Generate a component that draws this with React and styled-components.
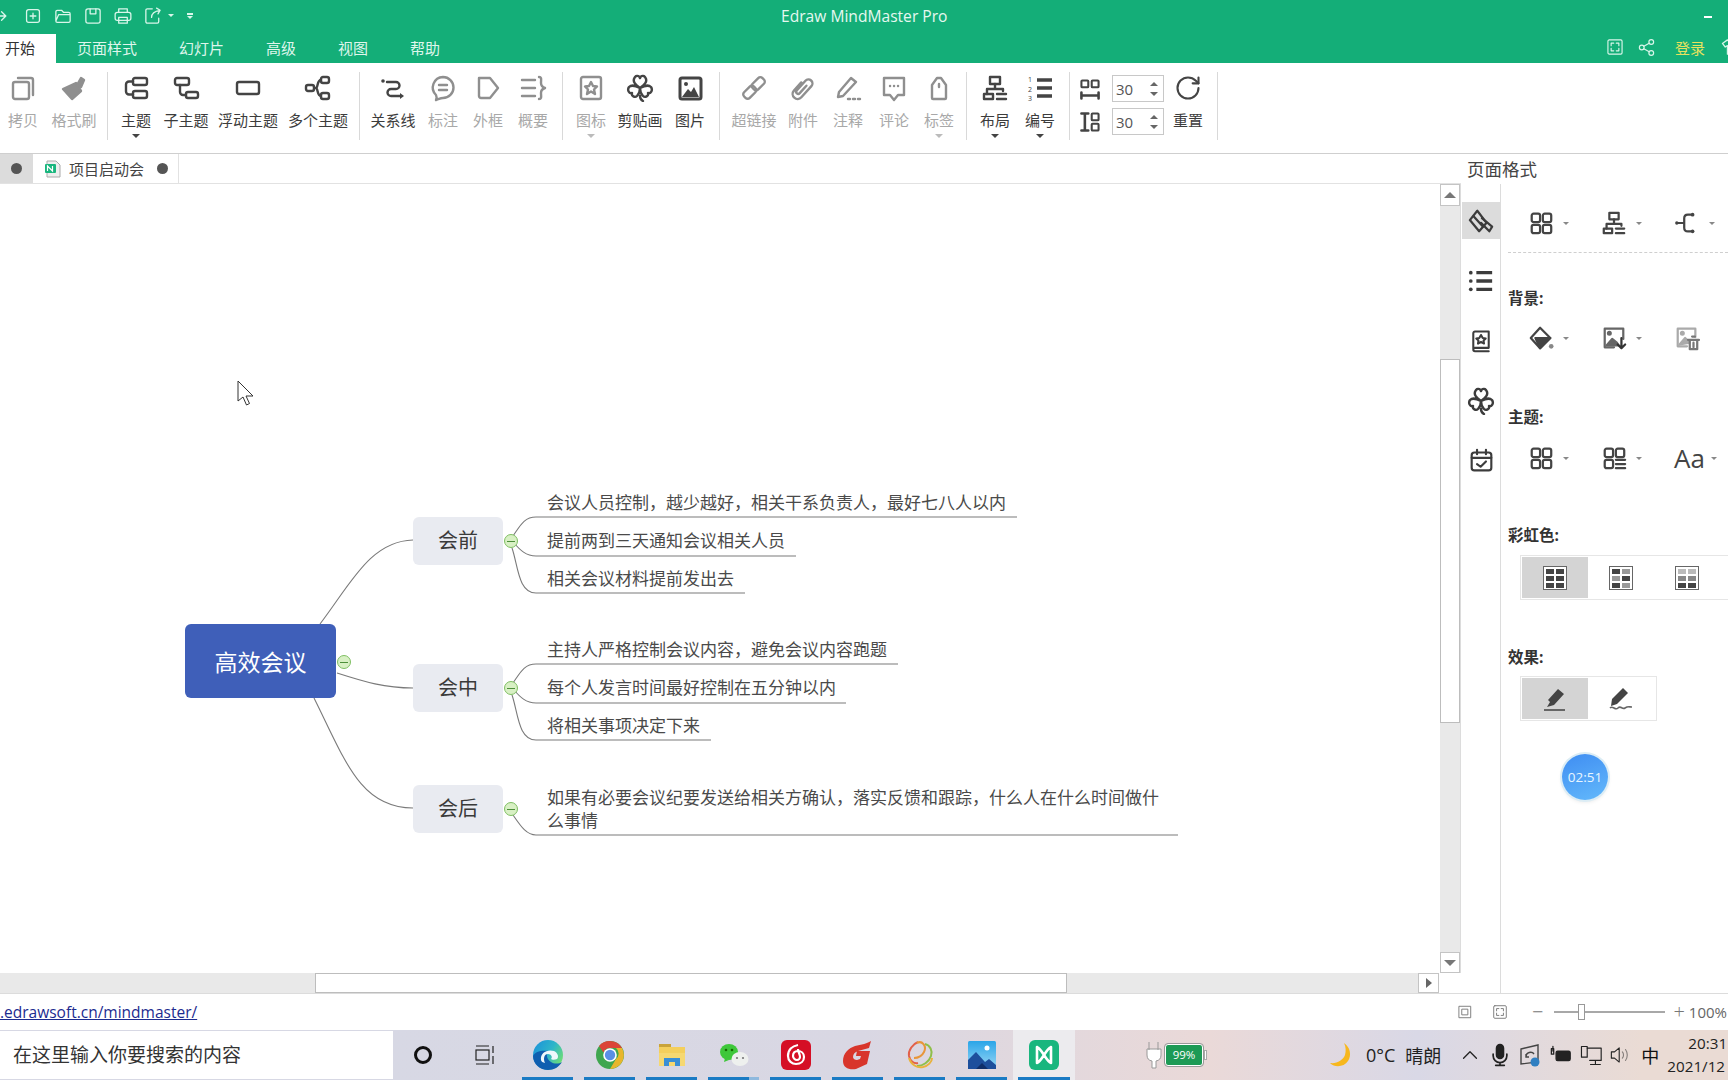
import React from "react";
import styled, { createGlobalStyle } from "styled-components";
import { RotateCw, Share2 } from "lucide-react";

const Global = createGlobalStyle`
  html, body { margin: 0; padding: 0; background: #fff; }
  body { font-family: "Open Sans", "Noto Sans CJK SC", sans-serif; color: #333; }
  * { box-sizing: border-box; }
`;

const GREEN = "#14ae78";

/* ---------- icon drawings ---------- */
const cloverPath =
  "M14 14C9 10 7 8 8 5c1-4 5-4 6-1 1-3 5-3 6 1 1 3-1 5-6 9zm0 0c-4-2-8-4-11-1-2 3 0 7 3 6-1 3 3 5 5 3s3-5 3-8zm0 0c4-2 8-4 11-1 2 3 0 7-3 6 1 3-3 5-5 3s-3-5-3-8zm0 8c0 2 1 4 3 5";

const shapes = {
  redo: <path d="M2 14h16M12 8l6 6-6 6" />,
  newFile: <><rect x="5" y="5" width="18" height="18" rx="3" /><path d="M14 10v8M10 14h8" /></>,
  folder: <path d="M4 21V8a2 2 0 0 1 2-2h6l3 3h7a2 2 0 0 1 2 2v1H8l-4 9zm0 0a2 2 0 0 0 2 2h16a2 2 0 0 0 2-2v-9" />,
  save: <><rect x="4" y="4" width="20" height="20" rx="3" /><path d="M10 4v7h8V4" /></>,
  print: <><path d="M8 9V4h12v5" /><rect x="3" y="9" width="22" height="11" rx="3" /><path d="M8 16h12v8H8z" /></>,
  exportFile: <path d="M22 17v5a2 2 0 0 1-2 2H6a2 2 0 0 1-2-2V6a2 2 0 0 1 2-2h7M12 16c0-6 4-9 12-10M19 3l5 3-3 5" />,
  copy: <><path d="M9 4h13a2 2 0 0 1 2 2v15" /><rect x="4" y="8" width="16" height="17" rx="2" /></>,
  brush: <><path d="M3 15l9 10 9-8-5-8z" fill="currentColor" /><path d="M17 11l4-7 3 2-3 7z" fill="currentColor" /></>,
  railBrush: <><path d="M10 3L2 13l10 12 8-9z" /><path d="M6 9l10 11" /><path d="M15 11l11 9-3 5-9-9" /></>,
  topic: <><rect x="11" y="4" width="14" height="7" rx="2" /><rect x="11" y="17" width="14" height="7" rx="2" /><path d="M11 7.500H7a3 3 0 0 0-3 3v7a3 3 0 0 0 3 3h4" /></>,
  subtopic: <><rect x="3" y="4" width="14" height="7" rx="2" /><rect x="14" y="18" width="12" height="6" rx="2" /><path d="M8 11v7a3 3 0 0 0 3 3h3" /></>,
  floating: <rect x="3" y="8" width="22" height="12" rx="2" />,
  multi: <><rect x="2" y="11" width="8" height="6" rx="2" /><rect x="17" y="3" width="8" height="6" rx="2" /><rect x="17" y="19" width="8" height="6" rx="2" /><path d="M10 14h2c2 0 1-8 5-8M12 14c2 0 1 8 5 8" /></>,
  relation: <><circle cx="4" cy="7" r="1.800" fill="currentColor" stroke="none" /><path d="M8 8h9a3.500 3.500 0 0 1 0 7h-5a3.500 3.500 0 0 0 0 7h9" /><path d="M21 19l4 3-4 3z" fill="currentColor" stroke="none" /></>,
  callout: <><path d="M14 3a10.500 10.500 0 0 1 0 21c-2 0-4 1-7 2 1-2 1-3 0-5A10.500 10.500 0 0 1 14 3z" /><path d="M10 11h8M10 16h8" /></>,
  frame: <path d="M5 4h11l8 10-8 10H7a2 2 0 0 1-2-2z" />,
  summary: <path d="M3 6h13M3 14h13M3 22h13M20 3c3 0 2 3 2 6s1 4 4 5c-3 1-4 2-4 5s1 6-2 6" />,
  star: <><rect x="4" y="3" width="20" height="22" rx="2" /><path d="M14 8l2 4 4 .5-3 3 1 4.500-4-2.500-4 2.500 1-4.500-3-3 4-.5z" /></>,
  clover: <path d={cloverPath} />,
  image: <><rect x="4" y="4" width="21" height="21" rx="2" strokeWidth="3" /><circle cx="10" cy="10" r="2" fill="currentColor" stroke="none" /><path d="M6 23l6-8 3 3 3-5 5 10z" fill="currentColor" stroke="none" /></>,
  link: <g transform="rotate(-45 14 14)"><rect x="1" y="10" width="14" height="8" rx="3" /><rect x="13" y="10" width="14" height="8" rx="3" /></g>,
  clip: <path transform="rotate(42 14 14)" d="M9 11v11a5 5 0 0 0 10 0V7a4 4 0 0 0-8 0v13a1.500 1.500 0 0 0 4 0V10" />,
  note: <path d="M5 18L17 4l5 4-13 14-5 1zM14 25h2M19 25h2M24 25h2" />,
  comment: <><path d="M4 4h20v17h-6l-4 5-4-5H4z" /><path d="M10 12h.1M14 12h.1M18 12h.1" /></>,
  tag: <><path d="M7 11l5-7h4l5 7v13a1 1 0 0 1-1 1H8a1 1 0 0 1-1-1z" /><path d="M14 10v3" /></>,
  layout: <><rect x="9" y="3" width="10" height="7" /><path d="M14 10v5M6 20v-5h16v2" /><rect x="3" y="20" width="9" height="5" /><path d="M16 20h9M16 25h9" /></>,
  numbering: <><path d="M11 6h15M11 14h15M11 22h15" strokeWidth="3.600" strokeLinecap="butt" /><text x="2" y="8" fontSize="7" stroke="none" fill="currentColor" fontFamily="Open Sans">1</text><text x="2" y="17.500" fontSize="7" stroke="none" fill="currentColor" fontFamily="Open Sans">2</text><text x="2" y="27" fontSize="7" stroke="none" fill="currentColor" fontFamily="Open Sans">3</text></>,
  spaceH: <><rect x="4" y="4" width="8" height="8" rx="1" /><rect x="16" y="4" width="8" height="8" rx="1" /><path d="M4 18v7M24 18v7M4 21.500h20" strokeWidth="3" /></>,
  spaceV: <><path d="M4 4h8M4 24h8M8 4v20" strokeWidth="3" /><rect x="16" y="4" width="8" height="8" rx="1" /><rect x="16" y="16" width="8" height="8" rx="1" /></>,
  grid4: <><rect x="4" y="4" width="9" height="9" rx="2" /><rect x="16" y="4" width="9" height="9" rx="2" /><rect x="4" y="16" width="9" height="9" rx="2" /><rect x="16" y="16" width="9" height="9" rx="2" /></>,
  gridList: <><rect x="4" y="4" width="9" height="9" rx="2" /><rect x="16" y="4" width="9" height="9" rx="2" /><rect x="4" y="16" width="9" height="9" rx="2" /><path d="M16 16h10M16 20.500h10M16 25h10" /></>,
  fishbone: <><path d="M4 14h7M18 5h-3c-3 0-4 1-4 4v10c0 3 1 4 4 4h3" /><circle cx="3" cy="14" r="1.800" fill="currentColor" stroke="none" /><circle cx="20" cy="5" r="2" fill="currentColor" stroke="none" /><circle cx="20" cy="23" r="2" fill="currentColor" stroke="none" /></>,
  bucket: <><path d="M13 3L3 14l10 11 11-11z" /><path d="M8 14h16l-11 11z" fill="currentColor" /><circle cx="25" cy="23" r="2.500" fill="#888" stroke="none" /></>,
  imageDown: <><path d="M14 24H4V4h20v11" /><circle cx="9" cy="9" r="1.500" fill="currentColor" /><path d="M6 22l6-7 5 4 2 3z" fill="currentColor" /><path d="M22 14v11M18 21l4 4 4-4" stroke="#333" /></>,
  imageTrash: <><path d="M14 23H4V4h19v9" /><circle cx="9" cy="9" r="1.500" fill="currentColor" /><path d="M6 21l6-7 5 5z" fill="currentColor" /><path d="M15 16h12M17 16v10h8V16M19.500 12.500h3M21 19v5" stroke="#777" /></>,
  listDots: <><path d="M9 5h17M9 14h17M9 23h17" strokeWidth="3.600" strokeLinecap="butt" /><circle cx="3" cy="5" r="2" fill="currentColor" stroke="none" /><circle cx="3" cy="14" r="2" fill="currentColor" stroke="none" /><circle cx="3" cy="23" r="2" fill="currentColor" stroke="none" /></>,
  starBook: <><path d="M5 23V5a2 2 0 0 1 2-2h16v19H7a2 2 0 0 0 0 4h16" /><path d="M14 7l2 3.500 3.500.5-2.500 2.500.5 3.500-3.500-2-3.500 2 .5-3.500-2.500-2.500 3.500-.5z" /></>,
  calendar: <><rect x="3" y="5" width="22" height="20" rx="3" /><path d="M3 11h22M9 2v5M19 2v5M9 18l4 3 6-6" /></>,
  fit: <><rect x="4" y="4" width="20" height="20" /><rect x="9" y="9" width="10" height="10" /></>,
  expand: <><rect x="3" y="3" width="22" height="22" rx="2" /><path d="M8 12V8h4M20 12V8h-4M8 16v4h4M20 16v4h-4" /></>,
  shirt: <path d="M9 4L2 9l4 5 3-2v12h10V12l3 2 4-5-7-5c-1 3-9 3-10 0z" />,
  mic: <><rect x="10" y="2" width="8" height="16" rx="4" fill="currentColor" /><path d="M6 13v2a8 8 0 0 0 16 0v-2M14 23v3M9 26h10" /></>,
  trayBattery: <><path d="M3 6h3v7H3zM5 9v-6" /><rect x="9" y="9" width="18" height="12" rx="2" fill="currentColor" /></>,
  trayNet: <><rect x="3" y="3" width="7" height="13" /><path d="M10 5h17v15H13M20 20v4M14 25h12" /></>,
  trayVol: <><path d="M3 10h4l6-5v18l-6-5H3z" /><path d="M17 10c2 2 2 6 0 8M21 7c3 4 3 10 0 14" opacity=".5" /></>,
  chevUp: <path d="M4 19L14 9l10 10" />,
};

const Svg = styled.svg`
  width: ${(p) => p.$size || 28}px;
  height: ${(p) => p.$size || 28}px;
  flex: none;
  display: block;
  color: ${(p) => p.$tone || "#444"};
  stroke: currentColor;
  stroke-width: ${(p) => p.$weight || 2.4};
  fill: none;
  stroke-linejoin: round;
  stroke-linecap: round;
`;

const Icon = ({ name, size, tone, weight }) => (
  <Svg viewBox="0 0 28 28" $size={size} $tone={tone} $weight={weight}>
    {shapes[name]}
  </Svg>
);

/* ---------- title + menu ---------- */
const Frame = styled.div`
  width: 1728px;
  height: 1080px;
  overflow: hidden;
  display: flex;
  flex-direction: column;
  background: #fff;
`;
const TitleBar = styled.div`
  height: 31px;
  background: ${GREEN};
  display: flex;
  align-items: center;
  position: relative;
`;
const QuickTools = styled.div`
  display: flex;
  align-items: center;
  margin-left: -7px;
  gap: 10px;
`;
const TinyCaret = styled.span`
  width: 0;
  height: 0;
  flex: none;
  border-left: ${(p) => p.$w || 4}px solid transparent;
  border-right: ${(p) => p.$w || 4}px solid transparent;
  border-top: ${(p) => p.$w || 4}px solid ${(p) => p.$color || "#555"};
  ${(p) => p.$up && `transform: rotate(180deg);`}
`;
const ExportCaret = styled(TinyCaret)`
  margin-left: -5px;
`;
const MoreMark = styled.div`
  margin-left: 3px;
  display: flex;
  flex-direction: column;
  align-items: center;
  gap: 1px;
  &::before {
    content: "";
    width: 6px;
    height: 2px;
    background: #d9f6ea;
  }
`;
const AppTitle = styled.div`
  position: absolute;
  left: 781px;
  top: 4px;
  font-size: 15.600px;
  line-height: 24px;
  color: #e6f8f0;
  white-space: nowrap;
`;
const Minimize = styled.div`
  position: absolute;
  left: 1704px;
  top: 16px;
  width: 8px;
  height: 2px;
  background: #fff;
`;
const MenuBar = styled.div`
  height: 32px;
  background: ${GREEN};
  display: flex;
  align-items: flex-end;
`;
const MenuTab = styled.div`
  height: 29px;
  line-height: 29px;
  font-size: 15px;
  white-space: nowrap;
  color: ${(p) => (p.$active ? "#333" : "#dff6ec")};
  background: ${(p) => (p.$active ? "#fff" : "transparent")};
  padding: ${(p) => (p.$active ? "0 21px 0 5px" : "0")};
  margin-right: ${(p) => (p.$active ? 21 : 42)}px;
`;
const MenuRight = styled.div`
  margin-left: auto;
  height: 32px;
  display: flex;
  align-items: center;
  margin-right: -13px;
`;
const FullscreenBtn = styled.div`
  margin-right: 13px;
`;
const Login = styled.span`
  font-size: 15px;
  color: #e8e25e;
  margin: 0 16px 0 19px;
`;

/* ---------- ribbon ---------- */
const Ribbon = styled.div`
  height: 91px;
  display: flex;
  border-bottom: 1px solid #cfcfcf;
`;
const Tool = styled.div`
  width: ${(p) => p.$w}px;
  flex: none;
  display: flex;
  flex-direction: column;
  align-items: center;
  padding-top: 10px;
`;
const ToolIcon = styled.div`
  height: 30px;
  display: flex;
  align-items: center;
  justify-content: center;
`;
const ToolLabel = styled.div`
  margin-top: 7px;
  font-size: 15px;
  line-height: 20px;
  white-space: nowrap;
  color: ${(p) => (p.$off ? "#a8a8a8" : "#3c3c3c")};
`;
const CaretSlot = styled.div`
  margin-top: 4px;
  height: 4px;
  display: flex;
`;
const Sep = styled.div`
  flex: none;
  width: 1px;
  height: 68px;
  margin: 9px ${(p) => p.$r || 0}px 0 ${(p) => p.$l || 0}px;
  background: #d9d9d9;
`;
const SpacingGrid = styled.div`
  display: grid;
  grid-template-columns: 24px 52px;
  grid-template-rows: 27px 27px;
  column-gap: 10px;
  row-gap: 6px;
  align-items: center;
  margin-top: 12px;
  height: 60px;
`;
const Spinner = styled.div`
  height: 27px;
  border: 1px solid #c8c8c8;
  display: flex;
  align-items: center;
  justify-content: space-between;
  padding: 0 5px 0 3px;
  font-size: 15px;
  color: #555;
`;
const SpinArrows = styled.div`
  display: flex;
  flex-direction: column;
  gap: 6px;
`;

/* ---------- workspace ---------- */
const Main = styled.div`
  flex: 1;
  display: flex;
  min-height: 0;
`;
const Workspace = styled.div`
  width: 1461px;
  flex: none;
  display: flex;
  flex-direction: column;
`;
const TabStrip = styled.div`
  height: 30px;
  display: flex;
  border-bottom: 1px solid #e2e2e2;
`;
const TabStub = styled.div`
  width: 33px;
  background: #dcdcdc;
  display: flex;
  align-items: center;
  justify-content: center;
`;
const TabDot = styled.span`
  width: 11px;
  height: 11px;
  border-radius: 50%;
  background: #555;
  flex: none;
`;
const DocTab = styled.div`
  width: 146px;
  display: flex;
  align-items: center;
  padding-left: 11px;
  border-right: 1px solid #e2e2e2;
  font-size: 15px;
  color: #444;
`;
const DocIcon = styled.svg`
  width: 18px;
  height: 18px;
  margin-right: 7px;
  flex: none;
`;
const DocName = styled.span`
  margin-right: 13px;
  white-space: nowrap;
`;
const CanvasRow = styled.div`
  flex: 1;
  display: flex;
  min-height: 0;
`;
const Canvas = styled.div`
  position: relative;
  width: 1440px;
  flex: none;
  background: #fff;
  overflow: hidden;
`;
const Wires = styled.svg`
  position: absolute;
  inset: 0;
  width: 100%;
  height: 100%;
  fill: none;
  stroke: #7a7a7a;
  stroke-width: 1.100;
`;
const RootNode = styled.div`
  position: absolute;
  left: 185px;
  top: 440px;
  width: 151px;
  height: 74px;
  border-radius: 6px;
  background: #3f5fb9;
  color: #fff;
  font-size: 23px;
  display: flex;
  align-items: center;
  justify-content: center;
`;
const SubNode = styled.div`
  position: absolute;
  left: 413px;
  top: ${(p) => p.$top - 184}px;
  width: 90px;
  height: 48px;
  padding-bottom: 3px;
  border-radius: 6px;
  background: #e9ebf1;
  color: #3a3a3a;
  font-size: 20px;
  display: flex;
  align-items: center;
  justify-content: center;
`;
const Leaf = styled.div`
  position: absolute;
  left: 547px;
  top: ${(p) => p.$top - 184}px;
  width: 620px;
  font-size: 17px;
  line-height: 23px;
  color: #4a4a4a;
`;
const Toggle = styled.div`
  position: absolute;
  left: ${(p) => p.$x - 7}px;
  top: ${(p) => p.$y - 184 - 7}px;
  width: 14px;
  height: 14px;
  border-radius: 50%;
  background: #d8f0c4;
  border: 1px solid #7fbf63;
  display: flex;
  align-items: center;
  justify-content: center;
  &::after {
    content: "";
    width: 8px;
    height: 1px;
    background: #4d8f3a;
  }
`;
const Pointer = styled.svg`
  position: absolute;
  left: 237px;
  top: 196px;
  width: 17px;
  height: 26px;
`;
const VScroll = styled.div`
  width: 21px;
  flex: none;
  background: #e9e9e9;
  display: flex;
  flex-direction: column;
  justify-content: space-between;
  position: relative;
  border-right: 1px solid #dcdcdc;
`;
const ScrollBtn = styled.div`
  background: #fff;
  border: 1px solid #c4c4c4;
  display: flex;
  align-items: center;
  justify-content: center;
  flex: none;
  width: ${(p) => p.$w}px;
  height: ${(p) => p.$h}px;
`;
const VThumb = styled.div`
  position: absolute;
  left: 0;
  right: 0;
  top: 175px;
  height: 364px;
  background: #fff;
  border: 1px solid #bdbdbd;
`;
const HScroll = styled.div`
  height: 21px;
  display: flex;
  background: #e9e9e9;
  border-bottom: 1px solid #dcdcdc;
  position: relative;
  justify-content: flex-end;
`;
const HThumb = styled.div`
  position: absolute;
  left: 315px;
  top: 0;
  bottom: 0;
  width: 752px;
  background: #fff;
  border: 1px solid #bdbdbd;
`;
const Corner = styled.div`
  width: 22px;
  background: #fff;
  flex: none;
`;
const SideArrow = styled.span`
  width: 0;
  height: 0;
  border-top: 5px solid transparent;
  border-bottom: 5px solid transparent;
  border-left: 6px solid #666;
`;

/* ---------- right panel ---------- */
const Panel = styled.div`
  flex: 1;
  position: relative;
  overflow: hidden;
  display: flex;
  flex-direction: column;
  border-bottom: 1px solid #dcdcdc;
`;
const PanelTitle = styled.div`
  height: 30px;
  padding-left: 6px;
  font-size: 17.500px;
  line-height: 31px;
  color: #444;
`;
const PanelBody = styled.div`
  flex: 1;
  display: flex;
  min-height: 0;
`;
const Rail = styled.div`
  width: 40px;
  flex: none;
  border-right: 1px solid #dcdcdc;
  padding-top: 18px;
  display: flex;
  flex-direction: column;
  gap: 23px;
`;
const RailBtn = styled.div`
  width: 38px;
  margin-left: 1px;
  height: 37px;
  display: flex;
  align-items: center;
  justify-content: center;
  background: ${(p) => (p.$active ? "#dcdcdc" : "transparent")};
`;
const PanelContent = styled.div`
  flex: 1;
  padding: 19px 0 0 7px;
  width: 228px;
  overflow: hidden;
`;
const IconRow = styled.div`
  height: 40px;
  display: flex;
  align-items: center;
  margin-left: 20px;
  margin-top: ${(p) => p.$mt || 0}px;
`;
const IconCell = styled.div`
  width: 73px;
  flex: none;
  display: flex;
  align-items: center;
  gap: 9px;
`;
const Dashed = styled.div`
  margin-top: 9px;
  border-top: 1px dashed #cfcfcf;
`;
const SectionLabel = styled.div`
  height: 22px;
  line-height: 22px;
  font-size: 15.500px;
  font-weight: 700;
  color: #333;
  margin-top: ${(p) => p.$mt}px;
`;
const Segments = styled.div`
  display: flex;
  width: ${(p) => p.$w}px;
  flex: none;
  height: 45px;
  margin: ${(p) => p.$mt}px 0 0 12px;
  padding: 1px;
  border: 1px solid #e6e6e6;
`;
const Segment = styled.div`
  width: 66px;
  flex: none;
  background: ${(p) => (p.$active ? "#d4d4d4" : "transparent")};
  display: flex;
  align-items: center;
  justify-content: center;
`;
const AaGlyph = styled.span`
  width: 28px;
  font-size: 26px;
  line-height: 28px;
  color: #444;
`;
const Timer = styled.div`
  position: absolute;
  left: 101px;
  top: 600px;
  width: 46px;
  height: 46px;
  border-radius: 50%;
  background: linear-gradient(160deg, #3f8df2, #63b9fb);
  box-shadow: 0 0 0 2px #dcedf5, 0 2px 4px rgba(0, 0, 0, 0.1);
  color: #e8f6ff;
  font-size: 13.500px;
  display: flex;
  align-items: center;
  justify-content: center;
`;

/* ---------- status bar + taskbar ---------- */
const StatusBar = styled.div`
  height: 36px;
  flex: none;
  display: flex;
  align-items: center;
  position: relative;
  background: #fff;
`;
const StatusLink = styled.a`
  font-size: 15.500px;
  color: #1c2b8f;
  text-decoration: underline;
`;
const StatusTools = styled.div`
  margin-left: auto;
  display: flex;
  align-items: center;
  white-space: nowrap;
  margin-right: 1px;
`;
const StatusIcon = styled.div`
  margin-right: ${(p) => p.$mr}px;
`;
const ZoomTrack = styled.div`
  position: relative;
  width: 111px;
  height: 2px;
  background: #a8a8a8;
  margin: 0 8px 0 11px;
`;
const ZoomThumb = styled.div`
  position: absolute;
  left: 24px;
  top: -7px;
  width: 7px;
  height: 16px;
  background: #fff;
  border: 1px solid #999;
`;
const ZoomSign = styled.span`
  font-size: 20px;
  line-height: 20px;
  color: #777;
  font-weight: 300;
`;
const ZoomValue = styled.span`
  font-size: 15px;
  color: #666;
  margin-left: 4px;
`;
const Taskbar = styled.div`
  height: 50px;
  flex: none;
  display: flex;
  align-items: center;
  background: linear-gradient(90deg, #d7d8e4 22%, #d9d7e3 50%, #ead9d8 70%, #d9d8e6 82%, #eadbd4 95%);
`;
const SearchBox = styled.div`
  width: 393px;
  height: 48px;
  flex: none;
  background: #fff;
  font-size: 19px;
  line-height: 48px;
  padding-left: 13px;
  color: #333;
  white-space: nowrap;
`;
const TaskCell = styled.div`
  width: ${(p) => p.$w || 62}px;
  height: 50px;
  flex: none;
  position: relative;
  display: flex;
  align-items: center;
  justify-content: center;
  background: ${(p) => (p.$active ? "#ecebee" : "transparent")};
  ${(p) =>
    p.$running &&
    `&::after {
      content: "";
      position: absolute;
      bottom: 0;
      left: 5px;
      right: ${p.$active ? 5 : 6}px;
      height: 3px;
      background: ${p.$stacked ? "linear-gradient(90deg, #1a7bc4 80%, #8fb9de 80%)" : "#1a7bc4"};
    }`}
`;
const CortanaRing = styled.div`
  width: 18px;
  height: 18px;
  border-radius: 50%;
  border: 3px solid #111;
`;
const BatteryWidget = styled.div`
  margin-left: 71px;
  width: 61px;
  display: flex;
  align-items: center;
  flex: none;
`;
const BatteryBody = styled.div`
  width: 38px;
  height: 22px;
  margin-left: 2px;
  border: 1px solid #fff;
  outline: 1px solid #999;
  border-radius: 3px;
  background: #1d9a55;
  color: #fff;
  font-size: 11.500px;
  line-height: 20px;
  text-align: center;
`;
const BatteryCap = styled.div`
  width: 3px;
  height: 10px;
  background: #fff;
  border: 1px solid #aaa;
  margin-left: 1px;
`;
const Weather = styled.div`
  margin-left: 122px;
  display: flex;
  align-items: center;
  flex: none;
  font-size: 18px;
  color: #222;
`;
const WeatherText = styled.span`
  margin-left: ${(p) => p.$ml}px;
  white-space: nowrap;
`;
const TrayCell = styled.div`
  width: 30px;
  flex: none;
  display: flex;
  align-items: center;
  justify-content: center;
  font-size: 18px;
  color: #111;
`;
const Tray = styled.div`
  display: flex;
  align-items: center;
  margin-left: 14px;
`;
const Clock = styled.div`
  margin-left: 2px;
  font-size: 15.200px;
  line-height: 23px;
  color: #222;
  white-space: nowrap;
`;
const ClockTime = styled.div`
  margin-left: 21px;
`;

/* ---------- taskbar logos ---------- */
const AppLogo = styled.svg`
  width: 32px;
  height: 32px;
  display: block;
`;

const EdgeLogo = () => (
  <AppLogo viewBox="0 0 32 32">
    <defs>
      <linearGradient id="edgeA" x1="0" y1="0" x2="1" y2="0.600">
        <stop offset="0" stopColor="#1a8fdc" />
        <stop offset="0.6" stopColor="#2fb6c8" />
        <stop offset="1" stopColor="#6bdc78" />
      </linearGradient>
    </defs>
    <circle cx="16" cy="16" r="15" fill="url(#edgeA)" />
    <path d="M1 17c0 8 7 14 15 14 6 0 11-3 14-8-3 2-8 2-11 0-5-3-5-9-2-11-7-1-14 0-16 5z" fill="#0f5fb0" />
    <path d="M9 21C8 14 15 10 22 12c4 2 5 6 3 8-2 1-5 1-6 0 2-2 0-5-3-5-4 0-5 5-3 9-2-.5-4-1.500-4-3z" fill="#eef7fb" />
  </AppLogo>
);
const ChromeLogo = () => (
  <AppLogo viewBox="0 0 32 32">
    <circle cx="16" cy="16" r="14" fill="#3fa64f" />
    <path d="M16 2a14 14 0 0 1 12 7H16a7 7 0 0 0-6.500 4.500L5 7a14 14 0 0 1 11-5z" fill="#db4437" />
    <path d="M28 9a14 14 0 0 1-12 21l6-10a7 7 0 0 0 0-11z" fill="#e8b62c" />
    <circle cx="16" cy="16" r="6.800" fill="#fff" />
    <circle cx="16" cy="16" r="5.200" fill="#5a8fe6" />
  </AppLogo>
);
const FolderLogo = () => (
  <AppLogo viewBox="0 0 32 32">
    <path d="M3 5h12v5H3z" fill="#c9a33a" />
    <path d="M3 8h26v9H3z" fill="#f4cf5c" />
    <path d="M3 14h26v13H3z" fill="#f6d871" />
    <path d="M8 27v-8h16v8h-5v-4h-6v4z" fill="#3a8fd6" />
  </AppLogo>
);
const WechatLogo = () => (
  <AppLogo viewBox="0 0 32 32">
    <ellipse cx="11" cy="13" rx="9" ry="8" fill="#3ec73a" />
    <path d="M7 19l-1 4 5-2z" fill="#3ec73a" />
    <ellipse cx="22" cy="20" rx="8.500" ry="7" fill="#eef0ee" />
    <circle cx="8" cy="11" r="1.300" fill="#136b00" />
    <circle cx="14" cy="11" r="1.300" fill="#136b00" />
    <circle cx="19" cy="19" r="1.100" fill="#777" />
    <circle cx="25" cy="19" r="1.100" fill="#777" />
  </AppLogo>
);
const NeteaseLogo = () => (
  <AppLogo viewBox="0 0 32 32">
    <rect x="1" y="1" width="30" height="30" rx="6" fill="#d50f25" />
    <path d="M18 6c-6 1-10 5-10 11 0 5 4 8 8 8 5 0 8-3 8-7 0-4-3-6-6-6s-5 2-5 5c0 2 2 4 4 4s3-2 3-3c0-3-2-5-2-8" fill="none" stroke="#fff" strokeWidth="2.200" />
  </AppLogo>
);
const RedGLogo = () => (
  <AppLogo viewBox="0 0 32 32">
    <path d="M29 2l-2 7-11 3c-3 1-5 3-5 6 0 2 2 3 4 3l3-1 1-3h-5l1-5h13l-3 13-11 5c-7 1-13-1-13-8 0-8 6-13 12-15 6-1 13-3 16-5z" fill="#d8352b" />
  </AppLogo>
);
const RainbowLogo = () => (
  <AppLogo viewBox="0 0 32 32">
    <g fill="none" strokeWidth="2">
      <path d="M14 3c-5 2-10 8-9 14 1 5 5 8 9 7" stroke="#e2604a" />
      <path d="M13 4c5-3 10 3 7 9-2 4-6 6-10 6" stroke="#e8963a" />
      <path d="M21 5c5 1 8 7 6 12-2 6-8 10-14 10" stroke="#8fbf4a" />
      <path d="M5 19c2 7 8 10 14 9 5-1 9-5 9-9" stroke="#e9b23c" />
    </g>
  </AppLogo>
);
const PhotoLogo = () => (
  <AppLogo viewBox="0 0 32 32">
    <defs>
      <linearGradient id="photoA" x1="0" y1="0" x2="0" y2="1">
        <stop offset="0" stopColor="#2aa5e8" />
        <stop offset="1" stopColor="#9ad7f5" />
      </linearGradient>
    </defs>
    <rect x="2" y="2" width="28" height="28" rx="1.500" fill="url(#photoA)" />
    <circle cx="21" cy="9" r="2.500" fill="#fff" />
    <path d="M2 30V21l8-8 9 10 4-3 7 6v4z" fill="#1d4f9c" />
    <path d="M10 30l6-6 6 6z" fill="#0f2f6a" />
  </AppLogo>
);
const MindLogo = () => (
  <AppLogo viewBox="0 0 32 32">
    <rect x="1" y="1" width="30" height="30" rx="6" fill="#19b67e" />
    <path d="M9 8v16M23 8v16M9 8c5 2 9 14 14 16M23 8c-5 2-9 14-14 16" fill="none" stroke="#fff" strokeWidth="2.600" strokeLinecap="round" />
  </AppLogo>
);

/* ---------- data ---------- */
const groups = [
  {
    sep: [5, 8],
    tools: [
      { w: 46, icon: "copy", label: "拷贝", off: true },
      { w: 56, icon: "brush", label: "格式刷", off: true },
    ],
  },
  {
    sep: [3, 5],
    tools: [
      { w: 40, icon: "topic", label: "主题", caret: true },
      { w: 60, icon: "subtopic", label: "子主题" },
      { w: 64, icon: "floating", label: "浮动主题" },
      { w: 76, icon: "multi", label: "多个主题" },
    ],
  },
  {
    sep: [7, 3],
    tools: [
      { w: 56, icon: "relation", label: "关系线" },
      { w: 44, icon: "callout", label: "标注", off: true },
      { w: 46, icon: "frame", label: "外框", off: true },
      { w: 44, icon: "summary", label: "概要", off: true },
    ],
  },
  {
    sep: [3, 2],
    tools: [
      { w: 50, icon: "star", label: "图标", off: true, caret: true },
      { w: 48, icon: "clover", label: "剪贴画" },
      { w: 52, icon: "image", label: "图片" },
    ],
  },
  {
    sep: [0, 6],
    tools: [
      { w: 64, icon: "link", label: "超链接", off: true },
      { w: 34, icon: "clip", label: "附件", off: true },
      { w: 56, icon: "note", label: "注释", off: true },
      { w: 36, icon: "comment", label: "评论", off: true },
      { w: 54, icon: "tag", label: "标签", off: true, caret: true },
    ],
  },
  {
    sep: [6, 8],
    tools: [
      { w: 44, icon: "layout", label: "布局", caret: true },
      { w: 46, icon: "numbering", label: "编号", caret: true },
    ],
  },
];

const subs = [
  { top: 517, text: "会前" },
  { top: 664, text: "会中" },
  { top: 785, text: "会后" },
];
const leaves = [
  { top: 491, text: "会议人员控制，越少越好，相关干系负责人，最好七八人以内" },
  { top: 529, text: "提前两到三天通知会议相关人员" },
  { top: 567, text: "相关会议材料提前发出去" },
  { top: 638, text: "主持人严格控制会议内容，避免会议内容跑题" },
  { top: 676, text: "每个人发言时间最好控制在五分钟以内" },
  { top: 714, text: "将相关事项决定下来" },
  { top: 786, text: "如果有必要会议纪要发送给相关方确认，落实反馈和跟踪，什么人在什么时间做什么事情" },
];
const toggles = [
  [344, 662],
  [511, 541],
  [511, 688],
  [511, 809],
];
const wires = [
  "M320 624C350 585 370 541 413 540",
  "M337 673C365 682 385 688 413 688",
  "M314 698C345 760 360 808 413 808",
  "M513 536C520 526 524 517 536 517H1017",
  "M514 543C520 550 526 556 536 556H796",
  "M512 548C518 565 518 593 536 593H745",
  "M513 683C520 673 524 664 536 664H898",
  "M514 690C520 697 526 703 536 703H846",
  "M512 695C518 712 518 740 536 740H711",
  "M513 815C520 825 526 835 536 835H1178",
];
const panelTop = ["grid4", "layout", "fishbone"];

const ToolView = ({ w, icon, label, off, caret }) => (
  <Tool $w={w}>
    <ToolIcon>
      <Icon name={icon} tone={off ? "#8f8f8f" : "#444"} />
    </ToolIcon>
    <ToolLabel $off={off}>{label}</ToolLabel>
    {caret && (
      <CaretSlot>
        <TinyCaret $color={off ? "#bbb" : "#444"} />
      </CaretSlot>
    )}
  </Tool>
);

const Swatch = ({ cells }) => (
  <svg width="24" height="24" viewBox="0 0 24 24">
    <rect x="0.500" y="0.500" width="23" height="23" fill="#fff" stroke="#666" />
    {cells.map((fill, i) => (
      <rect key={i} x={i % 2 ? 13 : 3} y={3 + Math.floor(i / 2) * 7} width="8" height="5" fill={fill} />
    ))}
  </svg>
);

const PenA = () => (
  <svg width="26" height="28" viewBox="0 0 26 28">
    <path d="M6 15L16 4l6 5-10 11-7 2 3-5-2-2z" fill="#444" />
    <path d="M2 25h21" stroke="#666" strokeWidth="2" />
  </svg>
);
const PenB = () => (
  <svg width="26" height="28" viewBox="0 0 26 28">
    <path d="M4 14L15 3l5 5-11 11-6 2z" fill="#444" />
    <path d="M2 23c3-3 5 3 8 0s4 2 7 0 4-1 7-1" fill="none" stroke="#666" strokeWidth="1.600" />
  </svg>
);

export default function App() {
  return (
    <>
      <Global />
      <Frame>
        <TitleBar>
          <QuickTools>
            <Icon name="redo" size={20} tone="#d9f6ea" weight={1.800} />
            {["newFile", "folder", "save", "print", "exportFile"].map((n) => (
              <Icon key={n} name={n} size={20} tone="#d9f6ea" weight={1.800} />
            ))}
            <ExportCaret $w={3} $color="#d9f6ea" />
            <MoreMark>
              <TinyCaret $w={3} $color="#d9f6ea" />
            </MoreMark>
          </QuickTools>
          <AppTitle>Edraw MindMaster Pro</AppTitle>
          <Minimize />
        </TitleBar>
        <MenuBar>
          <MenuTab $active>开始</MenuTab>
          <MenuTab>页面样式</MenuTab>
          <MenuTab>幻灯片</MenuTab>
          <MenuTab>高级</MenuTab>
          <MenuTab>视图</MenuTab>
          <MenuTab>帮助</MenuTab>
          <MenuRight>
            <FullscreenBtn>
              <Icon name="expand" size={18} tone="#d9f6ea" weight={1.800} />
            </FullscreenBtn>
            <Share2 size={19} color="#d9f6ea" strokeWidth={1.500} />
            <Login>登录</Login>
            <Icon name="shirt" size={20} tone="#d9f6ea" weight={1.800} />
          </MenuRight>
        </MenuBar>

        <Ribbon>
          {groups.map((g, i) => (
            <React.Fragment key={i}>
              {g.tools.map((t) => (
                <ToolView key={t.label} {...t} />
              ))}
              <Sep $l={g.sep[0]} $r={g.sep[1]} />
            </React.Fragment>
          ))}
          <SpacingGrid>
            <Icon name="spaceH" size={24} />
            <Spinner>
              30
              <SpinArrows>
                <TinyCaret $w={4} $up $color="#666" />
                <TinyCaret $w={4} $color="#666" />
              </SpinArrows>
            </Spinner>
            <Icon name="spaceV" size={24} />
            <Spinner>
              30
              <SpinArrows>
                <TinyCaret $w={4} $up $color="#666" />
                <TinyCaret $w={4} $color="#666" />
              </SpinArrows>
            </Spinner>
          </SpacingGrid>
          <Tool $w={48}>
            <ToolIcon>
              <RotateCw size={28} color="#444" strokeWidth={1.800} />
            </ToolIcon>
            <ToolLabel>重置</ToolLabel>
          </Tool>
          <Sep $l={5} />
        </Ribbon>

        <Main>
          <Workspace>
            <TabStrip>
              <TabStub>
                <TabDot />
              </TabStub>
              <DocTab>
                <DocIcon viewBox="0 0 18 18">
                  <path d="M3 1h9l4 4v12H3z" fill="#eee" stroke="#aaa" />
                  <rect x="1" y="4" width="11" height="9" rx="1" fill="#19b67e" />
                  <path d="M3.500 11V6l5 5V6" fill="none" stroke="#fff" strokeWidth="1.200" />
                </DocIcon>
                <DocName>项目启动会</DocName>
                <TabDot />
              </DocTab>
            </TabStrip>
            <CanvasRow>
              <Canvas>
                <Wires viewBox="0 184 1440 789">
                  {wires.map((d) => (
                    <path key={d} d={d} />
                  ))}
                </Wires>
                <RootNode>高效会议</RootNode>
                {subs.map((s) => (
                  <SubNode key={s.text} $top={s.top}>
                    {s.text}
                  </SubNode>
                ))}
                {leaves.map((l) => (
                  <Leaf key={l.top} $top={l.top}>
                    {l.text}
                  </Leaf>
                ))}
                {toggles.map(([x, y]) => (
                  <Toggle key={`${x}-${y}`} $x={x} $y={y} />
                ))}
                <Pointer viewBox="0 0 17 26">
                  <path d="M1 1v20l5-4 3.500 8 3-1.500L9 16h7z" fill="#fff" stroke="#333" strokeWidth="1" />
                </Pointer>
              </Canvas>
              <VScroll>
                <ScrollBtn $w={20} $h={22}>
                  <TinyCaret $w={6} $up $color="#777" />
                </ScrollBtn>
                <VThumb />
                <ScrollBtn $w={20} $h={21}>
                  <TinyCaret $w={6} $color="#777" />
                </ScrollBtn>
              </VScroll>
            </CanvasRow>
            <HScroll>
              <HThumb />
              <ScrollBtn $w={21} $h={20}>
                <SideArrow />
              </ScrollBtn>
              <Corner />
            </HScroll>
          </Workspace>

          <Panel>
            <PanelTitle>页面格式</PanelTitle>
            <PanelBody>
              <Rail>
                <RailBtn $active>
                  <Icon name="railBrush" size={26} tone="#3c3c3c" />
                </RailBtn>
                <RailBtn>
                  <Icon name="listDots" size={26} tone="#3c3c3c" />
                </RailBtn>
                <RailBtn>
                  <Icon name="starBook" size={24} tone="#3c3c3c" />
                </RailBtn>
                <RailBtn>
                  <Icon name="clover" size={28} tone="#3c3c3c" />
                </RailBtn>
                <RailBtn>
                  <Icon name="calendar" size={25} tone="#3c3c3c" />
                </RailBtn>
              </Rail>
              <PanelContent>
                <IconRow>
                  {panelTop.map((n) => (
                    <IconCell key={n}>
                      <Icon name={n} size={26} />
                      <TinyCaret $w={3} $color="#888" />
                    </IconCell>
                  ))}
                </IconRow>
                <Dashed />
                <SectionLabel $mt={34}>背景:</SectionLabel>
                <IconRow $mt={9}>
                  <IconCell>
                    <Icon name="bucket" size={26} />
                    <TinyCaret $w={3} $color="#888" />
                  </IconCell>
                  <IconCell>
                    <Icon name="imageDown" size={26} tone="#666" />
                    <TinyCaret $w={3} $color="#888" />
                  </IconCell>
                  <IconCell>
                    <Icon name="imageTrash" size={26} tone="#aaa" />
                  </IconCell>
                </IconRow>
                <SectionLabel $mt={48}>主题:</SectionLabel>
                <IconRow $mt={10}>
                  <IconCell>
                    <Icon name="grid4" size={26} />
                    <TinyCaret $w={3} $color="#888" />
                  </IconCell>
                  <IconCell>
                    <Icon name="gridList" size={26} />
                    <TinyCaret $w={3} $color="#888" />
                  </IconCell>
                  <IconCell>
                    <AaGlyph>Aa</AaGlyph>
                    <TinyCaret $w={3} $color="#888" />
                  </IconCell>
                </IconRow>
                <SectionLabel $mt={46}>彩虹色:</SectionLabel>
                <Segments $w={230} $mt={9}>
                  <Segment $active>
                    <Swatch cells={["#444", "#444", "#444", "#444", "#444", "#444"]} />
                  </Segment>
                  <Segment>
                    <Swatch cells={["#444", "#999", "#999", "#444", "#444", "#999"]} />
                  </Segment>
                  <Segment>
                    <Swatch cells={["#bbb", "#bbb", "#888", "#888", "#444", "#444"]} />
                  </Segment>
                </Segments>
                <SectionLabel $mt={46}>效果:</SectionLabel>
                <Segments $w={137} $mt={8}>
                  <Segment $active>
                    <PenA />
                  </Segment>
                  <Segment>
                    <PenB />
                  </Segment>
                </Segments>
              </PanelContent>
            </PanelBody>
            <Timer>02:51</Timer>
          </Panel>
        </Main>

        <StatusBar>
          <StatusLink>.edrawsoft.cn/mindmaster/</StatusLink>
          <StatusTools>
            <StatusIcon $mr={19}>
              <Icon name="fit" size={16} tone="#777" weight={1.600} />
            </StatusIcon>
            <StatusIcon $mr={24}>
              <Icon name="expand" size={16} tone="#777" weight={1.600} />
            </StatusIcon>
            <ZoomSign>−</ZoomSign>
            <ZoomTrack>
              <ZoomThumb />
            </ZoomTrack>
            <ZoomSign>+</ZoomSign>
            <ZoomValue>100%</ZoomValue>
          </StatusTools>
        </StatusBar>

        <Taskbar>
          <SearchBox>在这里输入你要搜索的内容</SearchBox>
          <TaskCell $w={60}>
            <CortanaRing />
          </TaskCell>
          <TaskCell $w={64}>
            <svg width="20" height="22" viewBox="0 0 20 22" fill="none" stroke="#222" strokeWidth="1.200">
              <rect x="1" y="6" width="13" height="10" />
              <path d="M1 2h13M1 20h13M18 2v7M18 12v8" />
            </svg>
          </TaskCell>
          <TaskCell $running><EdgeLogo /></TaskCell>
          <TaskCell $running><ChromeLogo /></TaskCell>
          <TaskCell $running><FolderLogo /></TaskCell>
          <TaskCell $running $stacked><WechatLogo /></TaskCell>
          <TaskCell $running><NeteaseLogo /></TaskCell>
          <TaskCell $running><RedGLogo /></TaskCell>
          <TaskCell $running><RainbowLogo /></TaskCell>
          <TaskCell $running><PhotoLogo /></TaskCell>
          <TaskCell $running $active><MindLogo /></TaskCell>
          <BatteryWidget>
            <svg width="17" height="30" viewBox="0 0 17 30" fill="#fff" stroke="#999">
              <path d="M3 2v8M12 2v8M1 9h14v6a6 6 0 0 1-5 6v7H6v-7a6 6 0 0 1-5-6z" />
            </svg>
            <BatteryBody>99%</BatteryBody>
            <BatteryCap />
          </BatteryWidget>
          <Weather>
            <svg width="24" height="26" viewBox="0 0 24 26">
              <path d="M15 1c6 4 8 12 4 18-4 6-13 7-18 2 7 1 13-3 15-8 1-4 1-8-1-12z" fill="#f7b71d" />
            </svg>
            <WeatherText $ml={13}>0°C</WeatherText>
            <WeatherText $ml={10}>晴朗</WeatherText>
          </Weather>
          <Tray>
            <TrayCell>
              <Icon name="chevUp" size={18} tone="#222" weight={2} />
            </TrayCell>
            <TrayCell>
              <Icon name="mic" size={24} tone="#222" weight={2} />
            </TrayCell>
            <TrayCell>
              <svg width="24" height="24" viewBox="0 0 24 24" fill="none" stroke="#444" strokeWidth="1.400">
                <path d="M3 6l17-4v17l-17 2z" />
                <path d="M8 14c0-5 6-6 8-3M8 11v3h3" />
                <circle cx="17" cy="19" r="4.500" fill="#2f7fc1" stroke="none" />
              </svg>
            </TrayCell>
            <TrayCell>
              <Icon name="trayBattery" size={22} tone="#222" weight={1.600} />
            </TrayCell>
            <TrayCell>
              <Icon name="trayNet" size={23} tone="#222" weight={1.400} />
            </TrayCell>
            <TrayCell>
              <Icon name="trayVol" size={22} tone="#222" weight={1.400} />
            </TrayCell>
            <TrayCell>中</TrayCell>
          </Tray>
          <Clock>
            <ClockTime>20:31</ClockTime>
            <div>2021/12</div>
          </Clock>
        </Taskbar>
      </Frame>
    </>
  );
}
